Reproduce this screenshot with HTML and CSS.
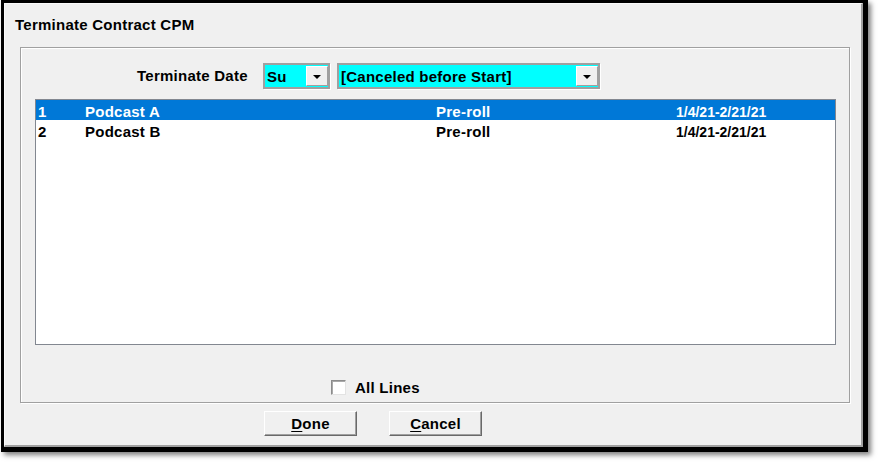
FILE: index.html
```html
<!DOCTYPE html>
<html>
<head>
<meta charset="utf-8">
<title>Terminate Contract CPM</title>
<link rel="stylesheet" href="styles.css">
</head>
<body>
<div class="frame">
  <div class="window">
    <div class="title">Terminate Contract CPM</div>
    <div class="group">
      <div class="date-row">
        <div class="label">Terminate Date</div>
        <div class="combo combo-day">
          <span class="combo-text">Su</span>
          <span class="drop"><span class="arrow"></span></span>
        </div>
        <div class="combo combo-status">
          <span class="combo-text">[Canceled before Start]</span>
          <span class="drop"><span class="arrow"></span></span>
        </div>
      </div>
      <div class="list">
        <div class="row selected">
          <span class="c-num">1</span>
          <span class="c-name">Podcast A</span>
          <span class="c-type">Pre-roll</span>
          <span class="c-date">1/4/21-2/21/21</span>
        </div>
        <div class="row">
          <span class="c-num">2</span>
          <span class="c-name">Podcast B</span>
          <span class="c-type">Pre-roll</span>
          <span class="c-date">1/4/21-2/21/21</span>
        </div>
      </div>
      <div class="check-row">
        <span class="checkbox"></span>
        <span class="check-label">All Lines</span>
      </div>
    </div>
    <div class="buttons">
      <button class="btn"><u>D</u>one</button>
      <button class="btn"><u>C</u>ancel</button>
    </div>
  </div>
</div>
</body>
</html>
```
FILE: styles.css
```css
* { box-sizing: border-box; }
html, body {
  margin: 0;
  padding: 0;
  background: #ffffff;
}
body {
  font-family: "Liberation Sans", Arial, sans-serif;
  font-weight: bold;
  font-size: 15px;
  letter-spacing: 0.25px;
  color: #000;
  width: 882px;
  height: 469px;
  overflow: hidden;
}
.frame {
  margin-left: 1px;
  width: 867px;
  height: 452px;
  border-style: solid;
  border-color: #000;
  border-width: 3px 5px 5px 3px;
  box-shadow: 3px 3px 5px rgba(0, 0, 0, 0.5);
}
.window {
  width: 859px;
  height: 444px;
  background: #f0f0f0;
  border-top: 1px solid #fafafa;
  border-left: 1px solid #fafafa;
  border-right: 2px solid #a0a0a0;
  border-bottom: 2px solid #a0a0a0;
}
.title {
  height: 43px;
  padding: 12px 0 0 10px;
  line-height: 18px;
}
.group {
  margin-left: 15px;
  width: 830px;
  height: 356px;
  border: 1px solid #a0a0a0;
  box-shadow: inset 1px 1px 0 #ffffff, 1px 1px 0 #ffffff;
  padding: 15px 0 7px 0;
  display: flex;
  flex-direction: column;
}
.date-row {
  display: flex;
  align-items: center;
  height: 26px;
  padding-left: 116px;
}
.label {
  width: 126px;
  line-height: 18px;
}
.combo {
  height: 26px;
  border: 2px solid #a0a0a0;
  box-shadow: 1px 1px 0 #ffffff;
  background: #00ffff;
  display: flex;
  align-items: center;
  padding-left: 2px;
}
.combo-day { width: 67px; }
.combo-status { width: 263px; margin-left: 7px; }
.combo-text {
  flex: 1;
  line-height: 18px;
  padding-top: 1px;
}
.drop {
  width: 22px;
  height: 20px;
  background: #f0f0f0;
  border-top: 1px solid #ffffff;
  border-left: 1px solid #ffffff;
  border-right: 1px solid #a0a0a0;
  border-bottom: 1px solid #a0a0a0;
  display: flex;
  align-items: center;
  justify-content: center;
}
.arrow {
  width: 0;
  height: 0;
  border-left: 4px solid transparent;
  border-right: 4px solid transparent;
  border-top: 4px solid #000;
  margin-top: 1px;
}
.list {
  margin: 10px 0 0 14px;
  width: 801px;
  height: 246px;
  background: #ffffff;
  border: 1px solid #828790;
}
.row {
  display: flex;
  height: 20px;
  line-height: 24px;
  padding-left: 2px;
  white-space: nowrap;
}
.row.selected {
  background: #0078d7;
  color: #ffffff;
}
.c-num { width: 47px; }
.c-name { width: 351px; }
.c-type { width: 240px; }
.c-date { font-size: 14px; letter-spacing: 0; }
.check-row {
  display: flex;
  align-items: center;
  height: 15px;
  margin-top: 35px;
  padding-left: 310px;
}
.checkbox {
  width: 15px;
  height: 15px;
  background: #ffffff;
  border-style: solid;
  border-width: 1px;
  border-color: #8c8c8c #e3e3e3 #e3e3e3 #8c8c8c;
  box-shadow: inset 1px 1px 0 #a9a9a9;
}
.check-label {
  margin-left: 9px;
  line-height: 18px;
}
.buttons {
  display: flex;
  gap: 32px;
  margin-top: 8px;
  padding-left: 259px;
}
.btn {
  width: 93px;
  height: 25px;
  padding: 0;
  font-family: "Liberation Sans", Arial, sans-serif;
  font-weight: bold;
  font-size: 15px;
  letter-spacing: 0.25px;
  color: #000;
  background: #f0f0f0;
  border-style: solid;
  border-width: 1px;
  border-color: #ffffff #696969 #696969 #ffffff;
  box-shadow: inset -1px -1px 0 #a0a0a0;
  line-height: 20px;
}
.btn u { text-underline-offset: 2px; }
```
